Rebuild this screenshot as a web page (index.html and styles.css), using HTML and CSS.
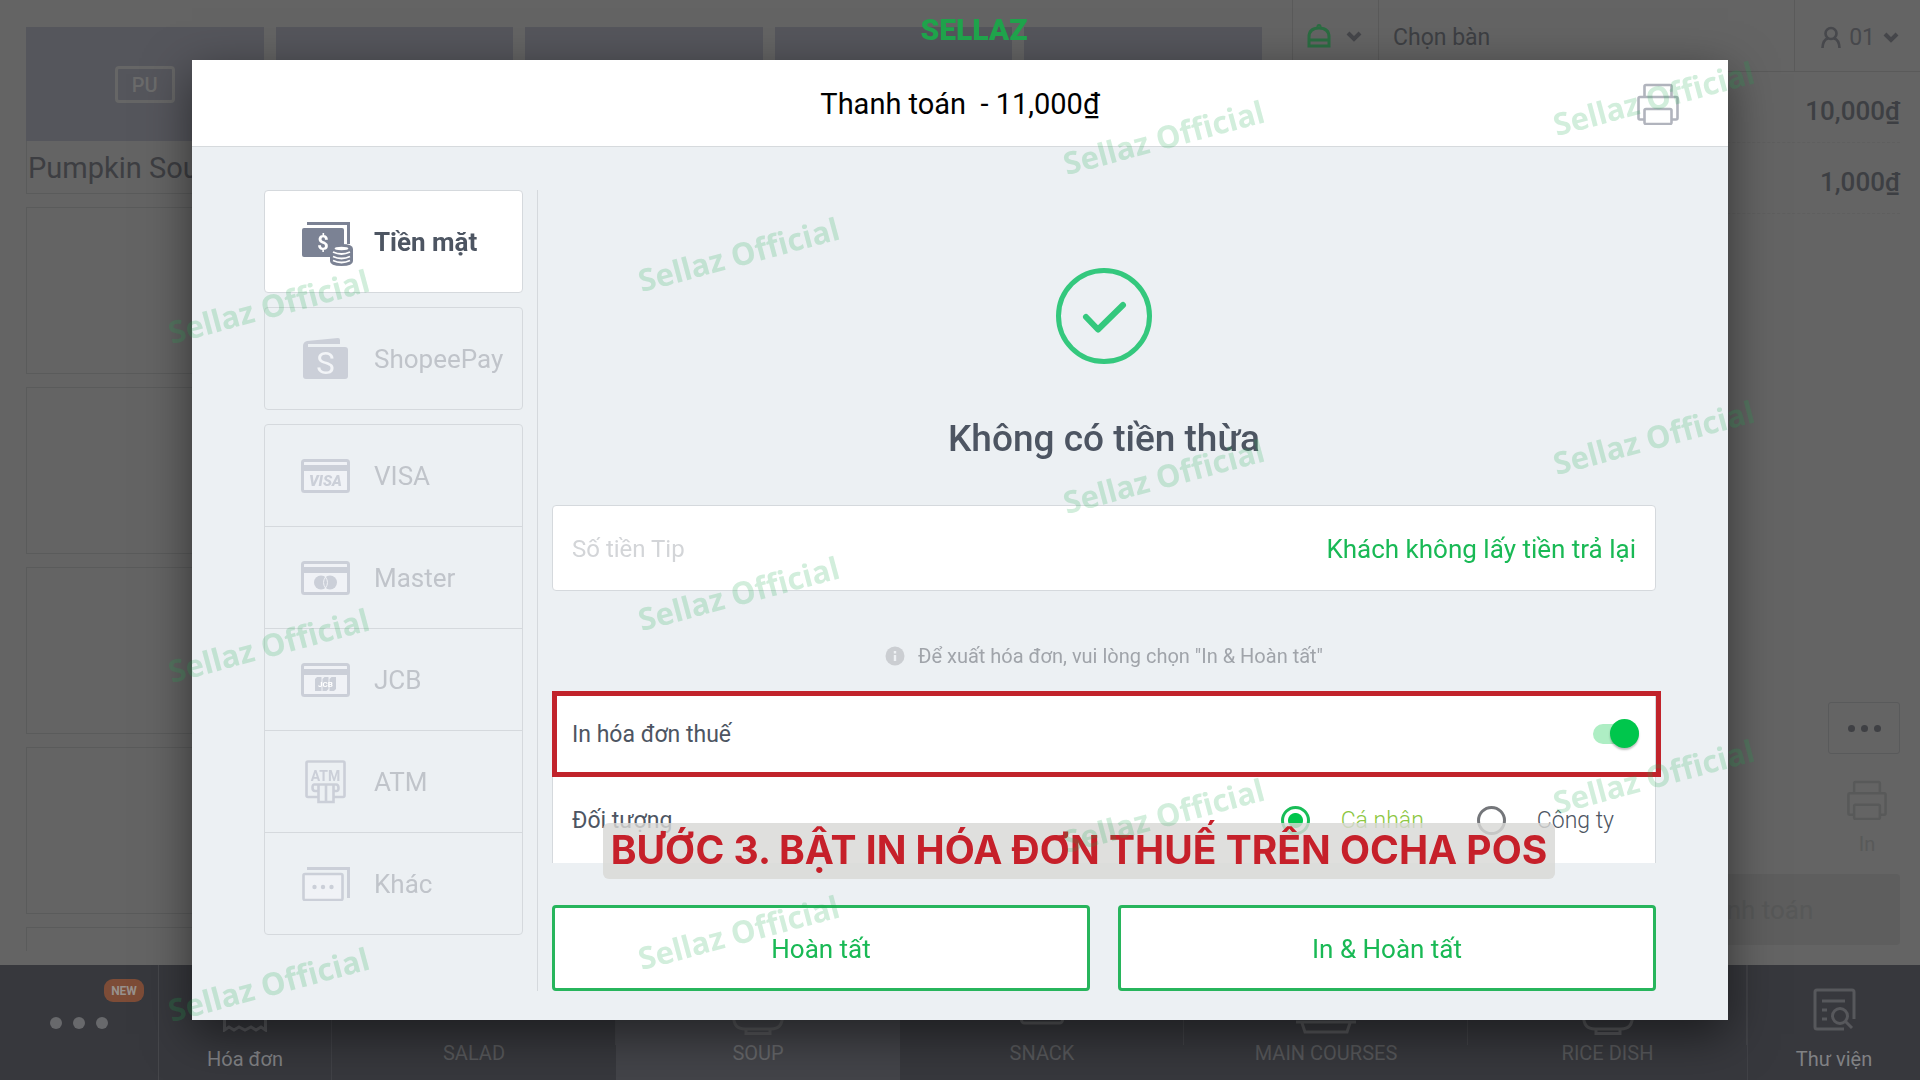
FILE: index.html
```html
<!DOCTYPE html>
<html lang="vi">
<head>
<meta charset="utf-8">
<title>Thanh toán</title>
<link rel="stylesheet" href="styles.css">
</head>
<body>
<svg class="defs" aria-hidden="true">
  <symbol id="i-printer" viewBox="0 0 42 42">
    <g fill="none" stroke="currentColor" stroke-width="2.6" stroke-linejoin="round">
      <path d="M7.500 14V3.500Q7.500 2 9 2H33Q34.500 2 34.500 3.500V14"/>
      <path d="M7.500 36.500H3Q1.500 36.500 1.500 35V15.500Q1.500 14 3 14H39Q40.500 14 40.500 15.500V35Q40.500 36.500 39 36.500H34.500"/>
      <rect x="7.500" y="26" width="27" height="15" rx="1.500"/>
    </g>
  </symbol>
  <symbol id="i-card" viewBox="0 0 49 34">
    <rect x="1.500" y="1.500" width="46" height="31" rx="2" fill="#f0f2f6" stroke="currentColor" stroke-width="3"/>
    <path d="M1 6H48V12H1Z" fill="currentColor"/>
  </symbol>
  <symbol id="i-chevron" viewBox="0 0 16 12">
    <path d="M2 3L8 9L14 3" fill="none" stroke="currentColor" stroke-width="4"/>
  </symbol>
  <symbol id="i-bowl" viewBox="0 0 52 40">
    <path d="M1.500 16V21Q1.500 34 13 34H39Q50.500 34 50.500 21V16ZM14 34V38.500H38V34" fill="none" stroke="currentColor" stroke-width="3"/>
  </symbol>
</svg>

<div class="app">
  <div class="workspace">
    <main class="products">
      <article class="tile filled"><div class="swatch"><span class="code">PU</span></div><h3>Pumpkin Soup</h3></article>
      <article class="tile filled"><div class="swatch"></div></article>
      <article class="tile filled"><div class="swatch"></div></article>
      <article class="tile filled"><div class="swatch"></div></article>
      <article class="tile filled"><div class="swatch"></div></article>
      <div class="tile"></div><div class="tile"></div><div class="tile"></div><div class="tile"></div><div class="tile"></div>
      <div class="tile"></div><div class="tile"></div><div class="tile"></div><div class="tile"></div><div class="tile"></div>
      <div class="tile"></div><div class="tile"></div><div class="tile"></div><div class="tile"></div><div class="tile"></div>
      <div class="tile"></div><div class="tile"></div><div class="tile"></div><div class="tile"></div><div class="tile"></div>
      <div class="tile"></div><div class="tile"></div><div class="tile"></div><div class="tile"></div><div class="tile"></div>
    </main>
    <aside class="order">
      <header class="order-head">
        <button class="service" aria-label="Loại phục vụ">
          <svg width="24" height="24" viewBox="0 0 24 24" fill="none" stroke="#2b6d42" stroke-width="3"><path d="M2 16V13Q2 4 12 4T22 13V16ZM2 16V22H22V16"/><circle cx="12" cy="2.500" r="1"/></svg>
          <svg class="chev" width="16" height="12"><use href="#i-chevron"/></svg>
        </button>
        <button class="table-pick">Chọn bàn</button>
        <button class="guests">
          <svg width="20" height="22" viewBox="0 0 20 22" fill="none" stroke="currentColor" stroke-width="2.600"><circle cx="10" cy="7.500" r="5.500"/><path d="M1.500 22Q2 13.500 7 12.500M18.500 22Q18 13.500 13 12.500"/></svg>
          01
          <svg class="chev" width="16" height="12"><use href="#i-chevron"/></svg>
        </button>
      </header>
      <ul class="lines"><li>10,000₫</li><li>1,000₫</li></ul>
      <div class="order-foot">
        <button class="more" aria-label="Thêm"><i></i><i></i><i></i></button>
        <button class="print"><svg width="42" height="40"><use href="#i-printer"/></svg>In</button>
        <button class="pay">Thanh toán</button>
      </div>
    </aside>
  </div>
  <nav class="bar">
    <button class="menu" aria-label="Menu"><i></i><i></i><i></i><span class="new">NEW</span></button>
    <button class="side"><svg width="44" height="44" viewBox="0 0 44 44" fill="none" stroke="currentColor" stroke-width="3"><path d="M1.500 2V42L6 39L11 42L16 39L22 42L28 39L33 42L38 39L42.500 42V2Z"/></svg>Hóa đơn</button>
    <button class="cat">SALAD</button>
    <button class="cat active"><svg width="52" height="40"><use href="#i-bowl"/></svg>SOUP</button>
    <button class="cat"><svg width="44" height="40" viewBox="0 0 44 40" fill="none" stroke="currentColor" stroke-width="3"><rect x="1.500" y="2" width="41" height="26" rx="3"/></svg>SNACK</button>
    <button class="cat"><svg width="60" height="40" viewBox="0 0 60 40" fill="none" stroke="currentColor" stroke-width="3"><path d="M0 27H60M6 28L9 37H51L54 28M20 25V18M28 25V20M36 25V18"/></svg>MAIN COURSES</button>
    <button class="cat"><svg width="52" height="40"><use href="#i-bowl"/></svg>RICE DISH</button>
    <button class="side last"><svg width="44" height="44" viewBox="0 0 44 44" fill="none" stroke="currentColor" stroke-width="3"><path d="M32 41H5Q3 41 3 39V4Q3 2 5 2H40Q42 2 42 4V31M10 13H33M10 22H15M10 31H15"/><circle cx="28" cy="28" r="7.500"/><path d="M33 33L40 40"/></svg>Thư viện</button>
  </nav>
</div>

<section class="modal" role="dialog" aria-label="Thanh toán">
  <header class="modal-head">
    <h1>Thanh toán&nbsp; - 11,000₫</h1>
    <button class="head-print" aria-label="In"><svg width="42" height="42"><use href="#i-printer"/></svg></button>
  </header>
  <div class="modal-body">
    <div class="methods">
      <div class="group selected">
        <button>
          <svg width="52" height="48" viewBox="0 -4 52 48"><path d="M6 1.500H47.500V22" fill="none" stroke="currentColor" stroke-width="3"/><rect x="1" y="6" width="42" height="29" rx="2" fill="currentColor"/><text x="22" y="28" class="ico-dollar">$</text><path d="M29 27Q29 22 40.500 22T52 27V39Q52 44 40.500 44T29 39Z" fill="currentColor"/><g fill="none" stroke="#fff" stroke-width="1.800"><ellipse cx="40.500" cy="26.500" rx="6" ry=".8"/><path d="M32 30Q40.500 34 49 30M32 34.500Q40.500 38.500 49 34.500M32 38.500Q40.500 42.500 49 38.500"/></g></svg>
          Tiền mặt
        </button>
      </div>
      <div class="group">
        <button>
          <svg width="52" height="44" viewBox="0 0 52 44"><path d="M2 9Q2 5 6 4L37 1Q39 1 39 3V7H7V10H44Q47 10 47 13V39Q47 42 44 42H5Q2 42 2 39Z" fill="currentColor"/><text x="24.500" y="37" class="ico-s">S</text></svg>
          ShopeePay
        </button>
      </div>
      <div class="group">
        <button><svg width="52" height="34" viewBox="0 0 52 34"><use href="#i-card" width="49" height="34"/><text x="24.500" y="27" class="ico-visa">VISA</text></svg>VISA</button>
        <button><svg width="52" height="34" viewBox="0 0 52 34"><use href="#i-card" width="49" height="34"/><circle cx="20" cy="21.500" r="7" fill="currentColor"/><circle cx="29" cy="21.500" r="7" fill="currentColor"/><path d="M24.500 16Q20.500 21.500 24.500 27Q28.500 21.500 24.500 16Z" fill="none" stroke="#f0f2f6"/></svg>Master</button>
        <button><svg width="52" height="34" viewBox="0 0 52 34"><use href="#i-card" width="49" height="34"/><path d="M16 14H20.500V28H14V16ZM21.500 16L23.500 14H27.500V26L25.500 28H21.500ZM28.500 16L30.500 14H35V26L33 28H28.500Z" fill="currentColor"/><text x="24.500" y="24" class="ico-jcb">JCB</text></svg>JCB</button>
        <button><svg width="52" height="44" viewBox="0 0 52 44"><g fill="none" stroke="currentColor" stroke-width="2.600"><path d="M17 37H7Q5.500 37 5.500 35.500V3Q5.500 1.500 7 1.500H42Q43.500 1.500 43.500 3V35.500Q43.500 37 42 37H33"/><path d="M17 31H14Q11.500 31 11.500 27.500T14 24.500H35Q37.500 24.500 37.500 28T35 31H33"/><path d="M17.500 25V42H32.500V25M25 25V41"/></g><text x="24.500" y="21" class="ico-atm">ATM</text></svg>ATM</button>
        <button><svg width="52" height="34" viewBox="0 0 52 34"><path d="M6 1.500H47.500V31" fill="none" stroke="currentColor" stroke-width="3"/><rect x="2.500" y="7" width="39" height="26" rx="1.500" fill="#f0f2f6" stroke="currentColor" stroke-width="2.600"/><g fill="currentColor"><circle cx="13.500" cy="20" r="2.200"/><circle cx="22" cy="20" r="2.200"/><circle cx="30.500" cy="20" r="2.200"/></g></svg>Khác</button>
      </div>
    </div>
    <div class="detail">
      <div class="result">
        <svg width="96" height="96" viewBox="0 0 96 96" fill="none" stroke="#34c87d"><circle cx="48" cy="48" r="45.500" stroke-width="5"/><path d="M30 49L42 61.500L67 37" stroke-width="6" stroke-linecap="round" stroke-linejoin="round"/></svg>
        <h2>Không có tiền thừa</h2>
      </div>
      <div class="tip"><input type="text" placeholder="Số tiền Tip" aria-label="Số tiền Tip"><button>Khách không lấy tiền trả lại</button></div>
      <p class="hint"><svg width="20" height="20" viewBox="0 0 20 20"><circle cx="10" cy="10" r="9.500" fill="#cbced2"/><path d="M10 5V7.500M10 9V15" stroke="#eef1f4" stroke-width="2.400"/></svg>Để xuất hóa đơn, vui lòng chọn "In &amp; Hoàn tất"</p>
      <div class="option marked"><label for="tax">In hóa đơn thuế</label><input id="tax" class="toggle" type="checkbox" checked></div>
      <div class="option">
        <span>Đối tượng</span>
        <div class="radios">
          <label class="on"><input type="radio" name="who" checked>Cá nhân</label>
          <label><input type="radio" name="who">Công ty</label>
        </div>
      </div>
      <div class="actions"><button>Hoàn tất</button><button>In &amp; Hoàn tất</button></div>
    </div>
  </div>
</section>

<div class="brand">SELLAZ</div>
<p class="caption">BƯỚC 3. BẬT IN HÓA ĐƠN THUẾ TRÊN OCHA POS</p>
<div class="marks" aria-hidden="true">
  <div class="col c1"><span>Sellaz Official</span><span>Sellaz Official</span><span>Sellaz Official</span></div>
  <div class="col c2"><span>Sellaz Official</span><span>Sellaz Official</span><span>Sellaz Official</span></div>
  <div class="col c3"><span>Sellaz Official</span><span>Sellaz Official</span><span>Sellaz Official</span></div>
  <div class="col c4"><span>Sellaz Official</span><span>Sellaz Official</span><span>Sellaz Official</span></div>
</div>
</body>
</html>
```
FILE: styles.css
```css
* { box-sizing: border-box; }
body { margin: 0; font-family: Roboto, "Noto Sans", sans-serif; background: #646464; color: #4d5562; }
button { font: inherit; color: inherit; background: none; border: 0; padding: 0; margin: 0; }
h1, h2, h3, p, ul { margin: 0; padding: 0; font-weight: 400; }
svg { display: block; flex: none; }
.defs { position: absolute; width: 0; height: 0; }

/* Dimmed point-of-sale screen */
.app { display: flex; flex-direction: column; height: 100vh; overflow: hidden; }
.workspace { flex: 1; min-height: 0; display: flex; }
.products { flex: 1; min-height: 0; margin: 27px 30px 14px 26px; overflow: hidden; display: grid; grid-template-columns: repeat(5, 1fr); grid-auto-rows: 167px; gap: 13px 12px; }
.tile { border: 1px solid #5a5b5b; }
.tile.filled { border-top: 0; }
.swatch { height: 114px; margin: 0 -1px; background: #55565c; display: flex; align-items: center; justify-content: center; }
.code { width: 60px; height: 37px; border: 3px solid #666; border-radius: 4px; color: #6b6b6b; font-size: 20px; line-height: 32px; font-weight: 500; text-align: center; }
.tile h3 { padding-left: 1px; font-size: 29px; line-height: 54px; color: #3d3e42; white-space: nowrap; }
.order { width: 628px; border-left: 1px solid #5a5a5a; display: flex; flex-direction: column; color: #3d3f43; }
.order-head { height: 72px; display: flex; border-bottom: 1px solid #5a5a5a; font-size: 23px; }
.service { width: 86px; display: flex; align-items: center; gap: 15px; padding-left: 14px; border-right: 1px solid #5a5a5a; }
.table-pick { flex: 1; text-align: left; padding: 3px 0 0 14px; }
.guests { width: 126px; border-left: 1px solid #5a5a5a; display: flex; align-items: center; justify-content: flex-end; gap: 8px; padding: 3px 21px 0 0; color: #47484c; }
.chev { color: #45464a; }
.lines { list-style: none; margin: 0 20px; font-size: 26px; font-weight: 500; text-align: right; }
.lines li { height: 71px; padding-top: 4px; line-height: 70px; border-bottom: 1px dashed #5f5f5f; }
.order-foot { margin-top: auto; padding: 0 20px 20px; display: flex; flex-direction: column; align-items: flex-end; }
.more { width: 72px; height: 52px; border: 1px solid #595a5b; border-radius: 3px; display: flex; align-items: center; justify-content: center; gap: 6px; }
.more i { width: 7px; height: 7px; border-radius: 50%; background: #3f4044; }
.print { width: 66px; margin-top: 26px; display: flex; flex-direction: column; align-items: center; gap: 12px; color: #585959; font-size: 20px; line-height: 24px; }
.pay { width: 304px; height: 71px; margin-top: 18px; border-radius: 4px; background: #5e5e5e; color: #575858; font-size: 26px; }

.bar { height: 115px; display: grid; grid-template-columns: 159px 173px repeat(4, 284fr) 279fr 173px; background: #37383d; color: #66676a; font-size: 20px; line-height: 24px; }
.bar button { display: flex; flex-direction: column; align-items: center; justify-content: flex-end; }
.bar .menu { position: relative; flex-direction: row; align-items: center; justify-content: center; gap: 11px; border-right: 1px solid #46474b; }
.menu i { width: 12px; height: 12px; border-radius: 50%; background: #68696c; }
.new { position: absolute; top: 14px; right: 14px; width: 40px; height: 23px; border-radius: 9px; background: #7d4c37; color: #98918d; font-size: 12px; line-height: 24px; font-weight: 700; }
.bar .side { padding-bottom: 9px; gap: 15px; border-right: 1px solid #414247; color: #808184; }
.side svg { color: #57585c; }
.bar .last { border-right: 0; border-left: 1px solid #414247; }
.bar .cat { padding-bottom: 15px; gap: 6px; color: #57585b; background: linear-gradient(#424347, #424347) right top / 1px 80px no-repeat; }
.bar .cat.active { background: #434449; color: #66676a; }
.cat svg { color: #56575a; }

/* Payment dialog */
.modal { position: fixed; inset: 60px 10%; display: flex; flex-direction: column; background: #ecf0f3; box-shadow: 0 14px 44px rgba(0, 0, 0, .5); }
.modal-head { height: 87px; flex: none; display: grid; grid-template-columns: 1fr auto 1fr; align-items: center; padding: 2px 49px 0; background: #fff; border-bottom: 1px solid #d6dadd; }
.modal-head h1 { grid-column: 2; font-size: 29px; line-height: 36px; color: #000; }
.head-print { justify-self: end; color: #b1b4bd; }
.modal-body { flex: 1; min-height: 0; display: flex; padding: 43px 72px 29px; }
.methods { width: 259px; flex: none; display: flex; flex-direction: column; gap: 14px; }
.group { border: 1px solid #d5d9dd; border-radius: 4px; color: #cbcfd8; }
.group button { display: flex; align-items: center; width: 100%; height: 101px; padding-left: 36px; gap: 21px; font-size: 26px; color: #c0c4ca; white-space: nowrap; }
.group button + button { height: 102px; border-top: 1px solid #d5d9dd; }
.group svg { color: #cbcfd8; }
.group.selected { background: #fff; }
.selected button { font-weight: 700; color: #4d5562; }
.selected svg { color: #7b8294; }
.ico-dollar, .ico-s, .ico-visa, .ico-jcb, .ico-atm { text-anchor: middle; font-weight: 700; }
.ico-dollar { font-size: 20px; fill: #fff; }
.group .ico-s { font-size: 31px; font-weight: 400; fill: #f2f4f7; }
.ico-visa { font-size: 15px; font-weight: 900; font-style: italic; fill: currentColor; }
.ico-jcb { font-size: 8px; fill: #fff; }
.ico-atm { font-size: 14px; fill: currentColor; }

.detail { flex: 1; min-width: 0; margin-left: 14px; padding-left: 14px; border-left: 1px solid #d5d9dd; display: flex; flex-direction: column; }
.result { display: flex; flex-direction: column; align-items: center; gap: 53px; padding: 78px 0 44px; }
.result h2 { font-size: 37px; line-height: 44px; font-weight: 500; }
.tip { height: 86px; display: flex; align-items: center; padding: 2px 19px 0; background: #fff; border: 1px solid #d5d9dd; border-radius: 4px; }
.tip input { flex: 1; min-width: 0; border: 0; padding: 0; outline: 0; background: none; font: 24px/32px Roboto, sans-serif; color: #4d5562; }
.tip input::placeholder { color: #d3d5d8; opacity: 1; }
.tip button { font-size: 26px; color: #19b955; }
.hint { display: flex; align-items: center; justify-content: center; gap: 13px; padding: 53px 0 23px; font-size: 20px; line-height: 24px; color: #a0a4aa; }
.option { position: relative; height: 86px; display: flex; align-items: center; justify-content: space-between; padding: 0 16px 0 19px; background: #fff; border: solid #d5d9dd; border-width: 0 1px; font-size: 23px; }
.option.marked::after { content: ""; position: absolute; inset: 0 -6px 0 -1px; border: 5px solid #c1232b; pointer-events: none; }
.toggle { appearance: none; position: relative; width: 46px; height: 20px; margin: 0; border-radius: 10px; background: #aeeec4; }
.toggle::after { content: ""; position: absolute; top: -5px; right: 0; width: 29px; height: 29px; border-radius: 50%; background: #00c64c; box-shadow: 0 2px 2px rgba(0, 0, 0, .25); }
.radios { display: flex; gap: 53px; padding-right: 25px; }
.radios label { display: flex; align-items: center; gap: 31px; font-weight: 300; }
.radios .on { color: #8cc63f; }
.radios input { appearance: none; width: 29px; height: 29px; margin: 0; border: 3px solid #74767a; border-radius: 50%; }
.radios input:checked { border-color: #18bd57; background: radial-gradient(circle, #00c64c 7px, #fff 8px); }
.actions { margin-top: auto; display: grid; grid-template-columns: 1fr 1fr; gap: 28px; }
.actions button { height: 86px; padding-top: 2px; background: #fff; border: 3px solid #27b55c; border-radius: 4px; font-size: 26px; color: #19b955; }

/* Video overlays */
.brand { position: fixed; top: 8px; left: 0; right: 0; padding-left: 28px; text-align: center; font: 900 30px/44px Roboto, sans-serif; color: #1fa34b; }
.marks { position: fixed; inset: 0; pointer-events: none; color: rgba(30, 168, 80, .2); font: 700 31px/40px "Noto Sans", "Open Sans", sans-serif; white-space: nowrap; }
.col { position: absolute; width: 220px; display: flex; flex-direction: column; align-items: center; gap: 299px; }
.col span { transform: rotate(-15deg); }
.c1 { left: 158px; top: 286px; }
.c2 { left: 628px; top: 234px; }
.c3 { left: 1053px; top: 117px; }
.c4 { left: 1543px; top: 78px; }
.caption { position: fixed; left: 603px; top: 823px; width: 952px; height: 56px; text-align: center; border-radius: 6px; background: rgba(216, 216, 214, .82); color: #c6202a; font: 700 39px/54px Inter, sans-serif; white-space: nowrap; }
```
